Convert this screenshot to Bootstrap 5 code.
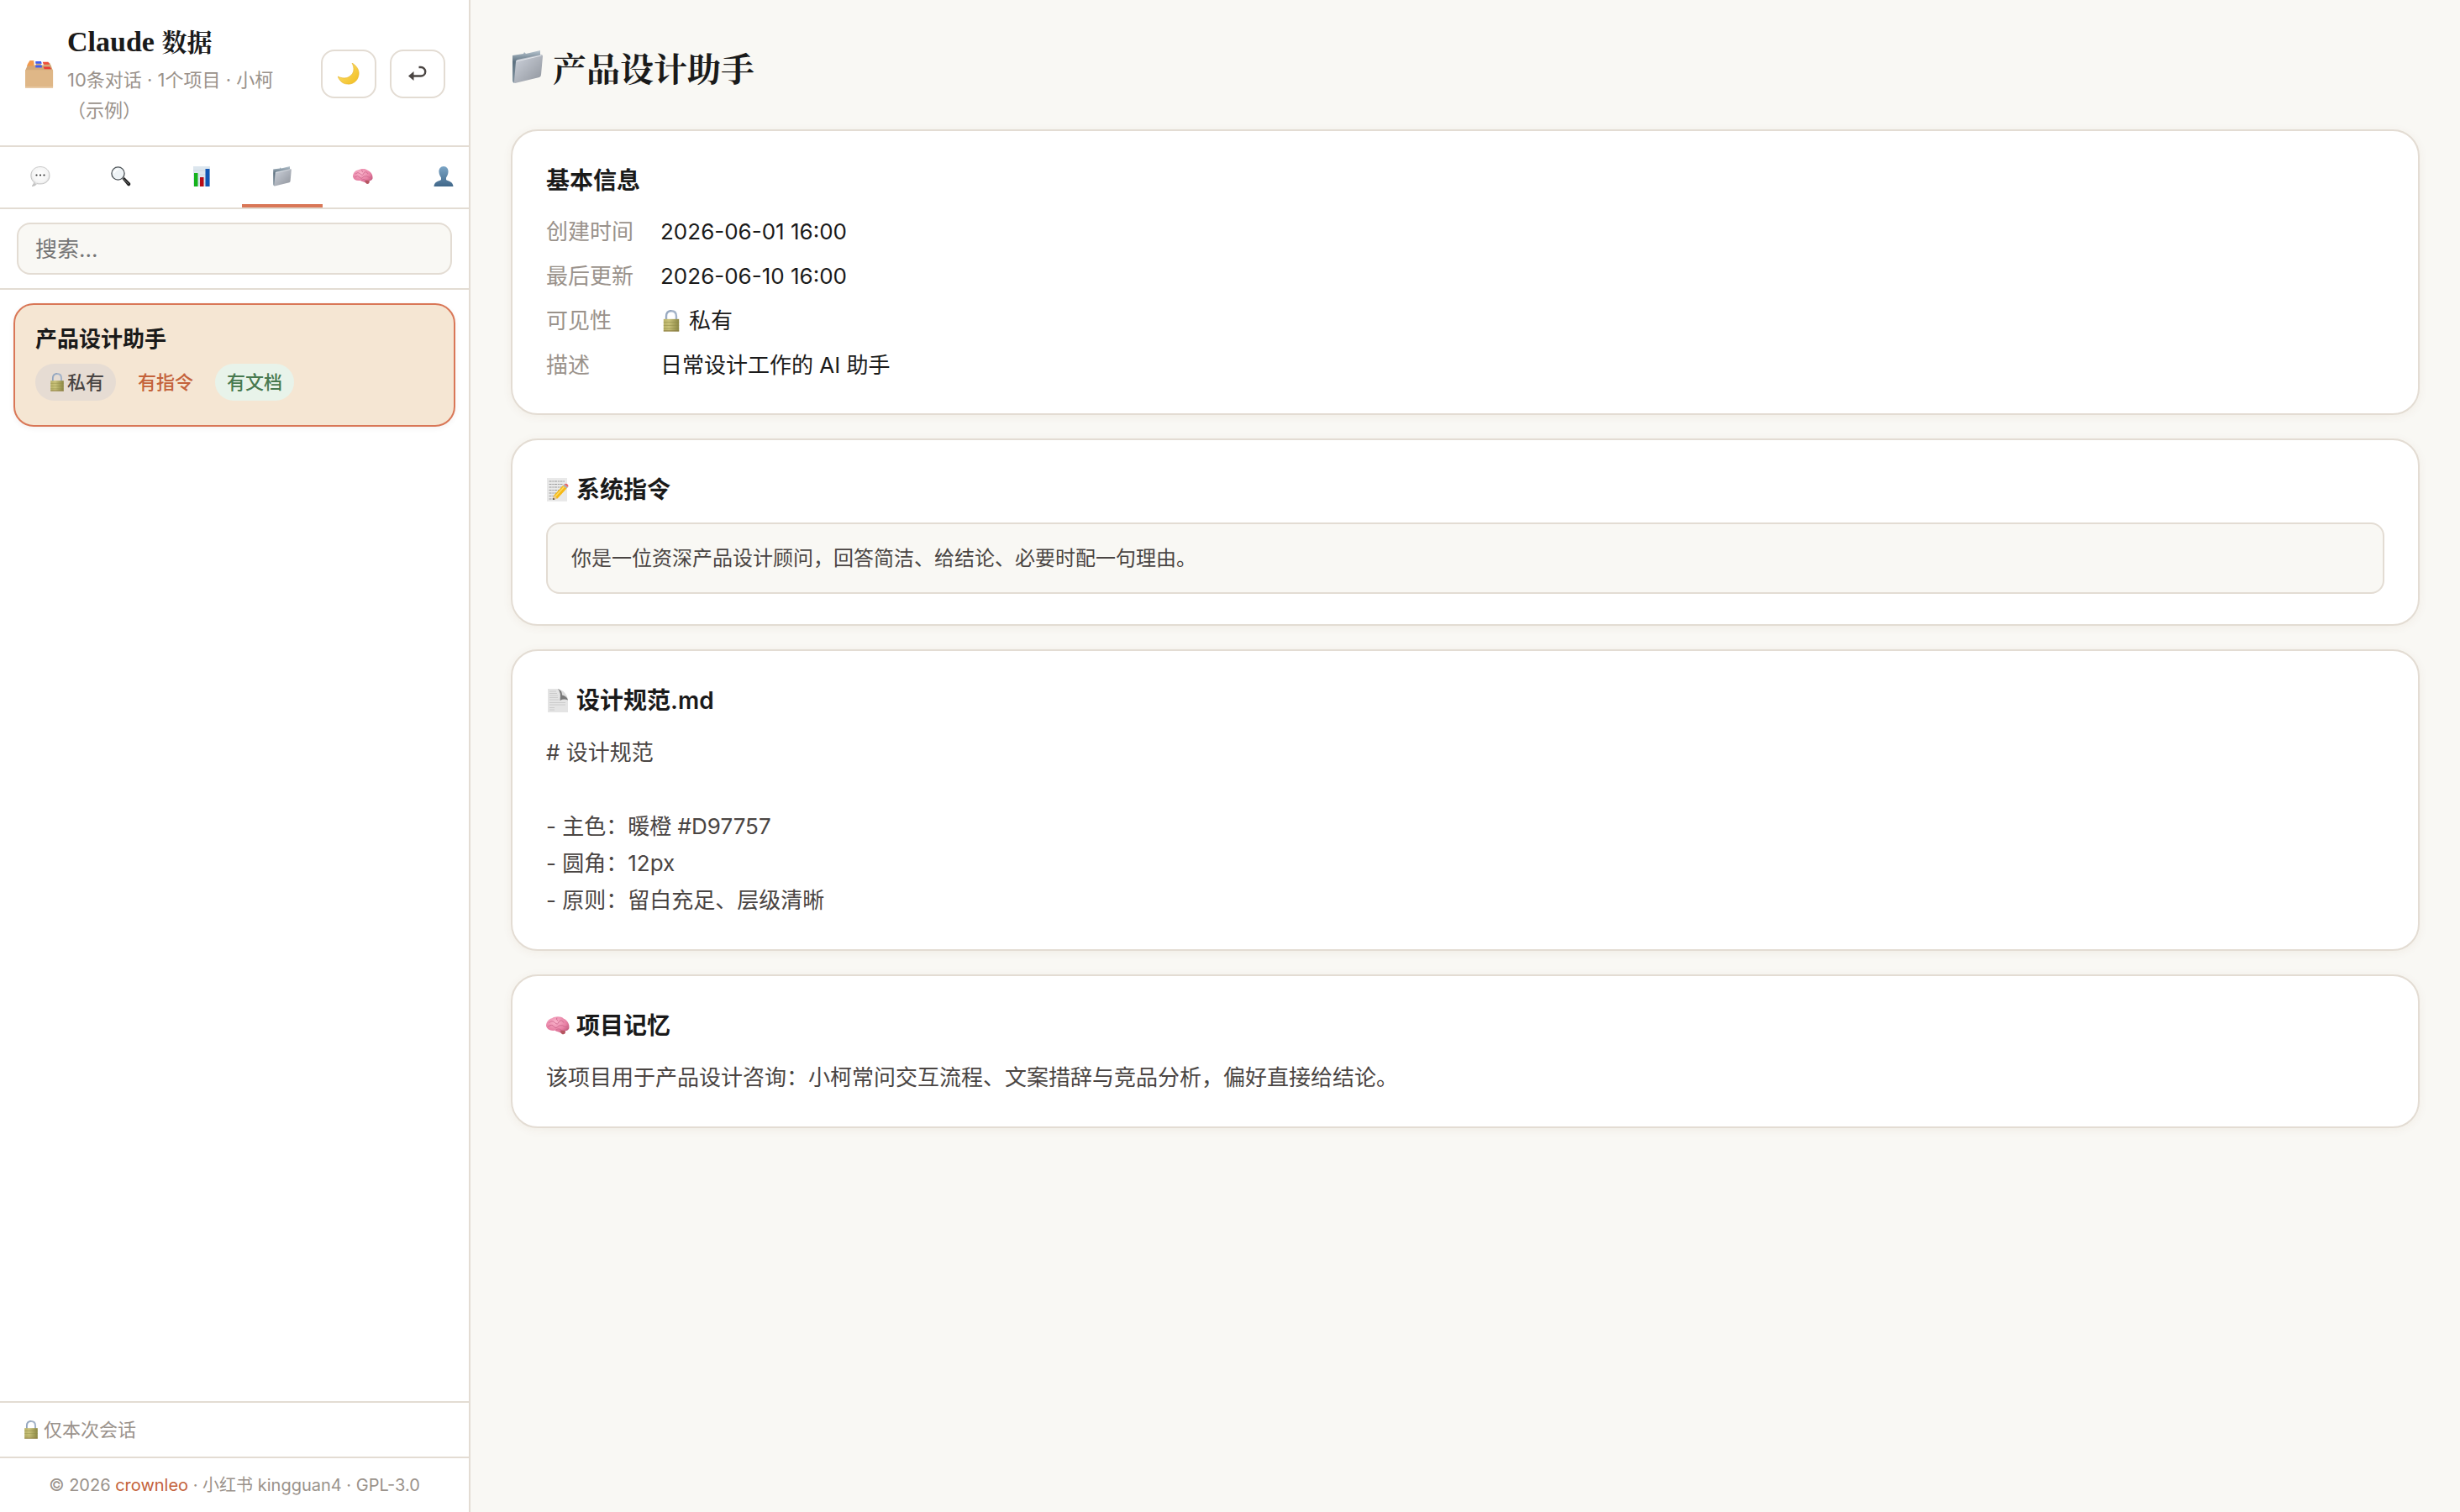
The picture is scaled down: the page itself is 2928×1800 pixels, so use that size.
<!DOCTYPE html>
<html lang="zh-CN">
<head>
<meta charset="utf-8">
<meta name="viewport" content="width=device-width, initial-scale=1">
<title>Claude 数据</title>
<link href="https://cdn.jsdelivr.net/npm/bootstrap@5.3.0/dist/css/bootstrap.min.css" rel="stylesheet">
<style>
:root {
  --line: #e3dcd3;
  --paper: #f9f8f4;
  --ink: #1a1a1a;
  --ink-soft: #4a4543;
  --ink-mute: #9a928b;
  --accent: #d97757;
  --accent-deep: #c4623a;
}
body {
  font-family: Inter, "Noto Sans CJK SC", sans-serif;
  font-size: 26px;
  line-height: 41px;
  color: var(--ink);
  background: var(--paper);
}
.serif { font-family: "Liberation Serif", "Noto Serif CJK SC", "Noto Sans CJK SC", serif; }
.emo { width: 1em; height: 1em; flex: none; overflow: visible; }
.side { width: 560px; border-right: 2px solid var(--line); background: #fff; }
.rule-b { border-bottom: 2px solid var(--line); }
.rule-t { border-top: 2px solid var(--line); }

.side-head { padding: 26px 28px 24px 30px; }
.side-logo { font-size: 34px; margin-right: 16px; }
.brand { font-size: 34px; line-height: 48px; font-weight: 700; margin: 0 0 2px; }
.brand-cjk { font-size: 30px; }
.stats { font-size: 22px; line-height: 36px; color: var(--ink-mute); }
.side-text { flex: 1 1 0; min-width: 0; margin-right: 16px; }
.tool-btn {
  width: 66px; height: 58px; padding: 0; border: 2px solid var(--line); border-radius: 16px;
  background: #fff; font-size: 26px;
}
.tabs-strip { overflow: hidden; height: 74px; }
.tab-btn {
  flex: 0 0 96px; height: 72px; border: 0; border-bottom: 4px solid transparent;
  background: none; padding: 0; font-size: 24px; line-height: 40px;
}
.tab-btn.active { border-bottom-color: var(--accent); }
.search-row { padding: 16px 20px; }
.search-box {
  height: 62px; padding: 0 20px; font-size: 26px; border: 2px solid var(--line);
  border-radius: 16px; background: var(--paper);
}
.search-box::placeholder { color: #757575; opacity: 1; }
.list-area { padding: 16px; }
.project {
  padding: 20px 24px 29px; border: 2px solid var(--accent); border-radius: 24px; background: #f5e6d3;
  color: var(--ink); text-align: left; box-shadow: 0 2px 6px rgba(60, 30, 10, .06);
}
.project-name { font-size: 26px; line-height: 42px; font-weight: 600; margin-bottom: 8px; }
.pills { gap: 12px; }
.pill {
  padding: 0 14px; border-radius: 22px; font-size: 22px; line-height: 44px; font-weight: 500;
}
.pill .emo { width: 24px; }
.pill-private { background: #e6dcd3; color: var(--ink-soft); }
.pill-order { color: var(--accent-deep); }
.pill-doc { background: #e8f3ea; color: #47794f; }
.foot-a { padding: 14px 26px; font-size: 22px; line-height: 36px; color: var(--ink-mute); }
.foot-b { padding: 16px 26px; font-size: 20px; line-height: 32px; color: var(--ink-mute); }
.foot-b a { color: var(--accent-deep); }

.main-pane { padding: 48px; min-width: 0; }
.page-title { font-size: 40px; line-height: 72px; font-weight: 700; margin: 0 0 34px; gap: 10px; }
.page-title .emo { margin-bottom: 8px; }
.panel {
  padding: 36px 40px; margin-bottom: 28px; border: 2px solid var(--line); border-radius: 32px;
  background: #fff; box-shadow: 0 2px 12px rgba(120, 60, 20, .06);
}
.panel h2 { font-size: 28px; line-height: 46px; font-weight: 600; margin: 0 0 16px; gap: 8px; }
.facts { display: grid; grid-template-columns: auto 1fr; gap: 12px 32px; padding: 1px 0; }
.facts dt { font-weight: 400; color: var(--ink-mute); }
.facts dd { margin: 0; }
.body-text { padding-top: 1px; line-height: 44px; color: var(--ink-soft); white-space: pre-line; }
.prompt-box {
  padding: 20px 28px; border: 2px solid var(--line); border-radius: 16px; background: var(--paper);
  font-size: 24px; line-height: 41px; color: var(--ink-soft);
}
</style>
<script src="https://cdn.jsdelivr.net/npm/bootstrap@5.3.0/dist/js/bootstrap.bundle.min.js"></script>
</head>
<body>
<svg width="0" height="0" class="position-absolute" aria-hidden="true">
  <defs>
    <linearGradient id="gFolder" x1="0" y1="0" x2="1" y2="1"><stop offset="0" stop-color="#ced3dc"/><stop offset="1" stop-color="#8f949c"/></linearGradient>
    <linearGradient id="gBack" x1="0" y1="0" x2="0" y2="1"><stop offset="0" stop-color="#b9c6d0"/><stop offset=".35" stop-color="#5d7180"/><stop offset="1" stop-color="#8797a3"/></linearGradient>
    <linearGradient id="gLock" x1="0" y1="0" x2="1" y2="0"><stop offset="0" stop-color="#b9b267"/><stop offset=".35" stop-color="#c9c27a"/><stop offset="1" stop-color="#8b8744"/></linearGradient>
    <linearGradient id="gPerson" x1="0" y1="0" x2="0" y2="1"><stop offset="0" stop-color="#7ba5c6"/><stop offset="1" stop-color="#41688a"/></linearGradient>
    <linearGradient id="gMoon" x1="0" y1="0" x2="1" y2="1"><stop offset="0" stop-color="#fbe27a"/><stop offset="1" stop-color="#f2bd1d"/></linearGradient>
    <radialGradient id="gBrain" cx=".4" cy=".3" r=".8"><stop offset="0" stop-color="#fab4cb"/><stop offset=".6" stop-color="#e77fa3"/><stop offset="1" stop-color="#b64d70"/></radialGradient>
    <radialGradient id="gBubble" cx=".5" cy=".4" r=".6"><stop offset="0" stop-color="#fff"/><stop offset=".7" stop-color="#f4f4f4"/><stop offset="1" stop-color="#c4c4c4"/></radialGradient>
    <symbol id="folder" viewBox="0 0 36 40">
      <path d="M0 6 13 4 14 2 16 4 33 0 33 8 4 36 2 39Q0 38 0 36Z" fill="url(#gBack)"/>
      <path d="M6 11 34 5Q36 5 36 7L34 29Q34 31 32 32L3 39Q2 39 2 37L4 13Q4 12 6 11Z" fill="url(#gFolder)"/>
      <path d="M4.500 13 34.500 6" stroke="#e3e7ec" fill="none"/>
    </symbol>
    <symbol id="box" viewBox="0 0 36 36">
      <path d="M5 4Q5 1 7 1H11V7H3ZM14 4H20V8H13ZM24 4H31L32 9H23Z" fill="#cfa97a"/>
      <path d="M4 4 6 1H10L11 4V8H2Z" fill="#f3994c"/>
      <path d="M3 7 0 14V35Q0 36 1 36H34Q35 36 35 35V14L32 6 22 7Z" fill="#d3a878"/>
      <path d="M13 2H20L21 5H13Z" fill="#3f5cf0"/><path d="M22 3H29L31 6H23Z" fill="#ee4e3a"/>
      <path d="M13 7H21L21 10H13Z" fill="#3f5cf0"/><path d="M23 9H31L33 12H24Z" fill="#ea3a34"/>
      <path d="M4 5H10L10 8H3Z" fill="#f3994c"/>
      <path d="M0 13H35V35Q35 36 34 36H1Q0 36 0 35Z" fill="#dfb787"/>
      <path d="M0 35H35" stroke="#f1dcc0"/>
    </symbol>
    <symbol id="moon" viewBox="0 0 26 26">
      <path d="M17 0C22 3 26 8 25 14 24 22 17 26 11 25 6 25 2 21 0 16 4 18 10 19 14 16 20 12 20 6 17 0Z" fill="url(#gMoon)" stroke="#e5b32a" stroke-width=".6"/>
    </symbol>
    <symbol id="bubble" viewBox="0 0 24 24">
      <path d="M12 .5C18.500 .5 23 5 23 11S18.500 21 12 21C10 21 9 21 8 20.500 7 22 5 23.500 2 23.500 4 22 4.500 20 4.500 19 2 17 .8 14 .8 11 .8 5 5.500 .5 12 .5Z" fill="url(#gBubble)" stroke="#b3b3b3" stroke-width=".7"/>
      <g fill="#333"><circle cx="7.500" cy="10.500" r="1.100"/><circle cx="12" cy="10.500" r="1.100"/><circle cx="16.500" cy="10.500" r="1.100"/></g>
    </symbol>
    <symbol id="lens" viewBox="0 0 24 24">
      <path d="M13.500 15 16 13 23 20Q24 22 21.500 23.500L20 23Z" fill="#222"/>
      <path d="M14 14 21 21" stroke="#777" stroke-width="1"/>
      <circle cx="8.500" cy="8.500" r="7.600" fill="#eef3f6" stroke="#4c5256" stroke-width="1.300"/>
      <path d="M4 8Q5 4 9 3.500" stroke="#fff" stroke-width="1.500" fill="none"/>
    </symbol>
    <symbol id="bars" viewBox="0 0 24 24">
      <path d="M2 0H22V24H2Z" fill="#dce6ee"/><path d="M2 5H22M2 10H22M2 15H22M2 20H22" stroke="#c6d2dc" stroke-width=".6"/>
      <path d="M3 8H7.500V24H3Z" fill="#15b21c"/><path d="M10 13H14.500V24H10Z" fill="#b80d17"/><path d="M16.500 3H21.500V24H16.500Z" fill="#1057b5"/>
    </symbol>
    <symbol id="brain" viewBox="0 0 24 24">
      <path d="M0 12.500C0 8 3 5 6 4.500 9 2.500 15 2 18 5 22 6.500 24 11 23.500 14.500 22.500 17 20.500 17 19.500 17.500 20 21 17 21.500 15 19.500 13 18 11 18.500 9 17 4 17.500 1 16 0 12.500Z" fill="url(#gBrain)"/>
      <path d="M3 9Q6 6 9 9T13 8Q16 5 18 9M2 13Q6 10 8 13T13 12Q17 11 19 13 21 14 22 12M10 16.500Q13 14 16 17M11 4Q10 6 12 7" fill="none" stroke="#c9638a" stroke-width=".7"/>
      <path d="M14.500 17Q18 16.500 19.500 17.500 20 20.500 17 21 15 20 14.500 17Z" fill="#b55660"/>
    </symbol>
    <symbol id="person" viewBox="0 0 24 24">
      <path d="M12 0C15.500 0 18 3 17.500 7 17.300 10 16 12 15 13.500V16C18 18 23 18 23.500 24H.5C1 18 6 18 9 16V13.500C8 12 6.700 10 6.500 7 6 3 8.500 0 12 0Z" fill="url(#gPerson)"/>
    </symbol>
    <symbol id="lock" viewBox="0 0 18 24">
      <path d="M3.500 12V7C3.500 3 6 1.200 9 1.200S14.500 3 14.500 7V12" fill="none" stroke="#a3b3c8" stroke-width="2.200"/>
      <path d="M3 12V7C3 3 6 .5 9 .5" fill="none" stroke="#7f93b0" stroke-width=".6"/>
      <path d="M.5 10H17.500V23.500H.5Z" fill="url(#gLock)"/><path d="M.5 13.500H17.500M.5 17H17.500M.5 20.500H17.500" stroke="#8e8a47" stroke-width=".5"/><path d="M.5 23H17.500" stroke="#8a7a40"/>
    </symbol>
    <symbol id="memo" viewBox="0 0 26 28">
      <path d="M0 0H24V28H0Z" fill="#e9e9e9"/><path d="M2.500 4H21M2.500 7.500H19M2.500 11H20M2.500 14.500H14M2.500 18H11M2.500 21.500H9M2.500 25H8" stroke="#9c9c9c" stroke-width="1.100" stroke-dasharray="3 .8 2 .7"/>
      <path d="M7 26 8 21 19 9 23.500 12.500 12.500 24.500Z" fill="#f6b916"/><path d="M9.500 22.500 20.500 10.500" stroke="#fbdb67" stroke-width="1.500"/>
      <path d="M7 26 8 21 12.500 24.500Z" fill="#e6c9a0"/><path d="M7 26 7.500 23.800 9.500 25.200Z" fill="#333"/>
      <path d="M19 9 20.500 7.500 25 11 23.500 12.500Z" fill="#a9adb3"/><path d="M20.500 7.500Q23 6 25 8 26 10 25 11Z" fill="#e66a6a"/>
    </symbol>
    <symbol id="page" viewBox="0 0 26 28">
      <path d="M1 0H14L25 12V28H1Z" fill="#e4e4e4"/><path d="M3 3H11M3 5.500H12M3 8H13M3 10.500H13M3 13H14M3 16.500H22M3 19H22M3 22.500H9M3 25H9" stroke="#c4c4c4" stroke-width=".8"/>
      <path d="M13 0Q17 4 15.500 14 20 11.500 25 13.500 24 9 20 7 18 2 13 0Z" fill="#7a7a7a"/><path d="M15 .5Q23 4 25 12 22 8 18 7.500 18 3 15 .5Z" fill="#dcdcdc"/>
    </symbol>
    <symbol id="back" viewBox="0 0 22 20">
      <path d="M6 12.500H15A5.200 5.200 0 0 0 15 2H12.500" fill="none" stroke="#4a4543" stroke-width="2.400"/><path d="M0 12.500 6.500 7V18Z" fill="#4a4543"/>
    </symbol>
  </defs>
</svg>

<div class="d-flex min-vh-100">
  <aside class="side d-flex flex-column flex-shrink-0">
    <header class="side-head rule-b d-flex align-items-center">
      <svg class="emo side-logo" aria-hidden="true"><use href="#box"/></svg>
      <div class="side-text">
        <h1 class="brand serif">Claude <span class="brand-cjk">数据</span></h1>
        <div class="stats">10条对话 · 1个项目 · 小柯（示例）</div>
      </div>
      <div class="d-flex gap-3">
        <button type="button" class="tool-btn d-flex align-items-center justify-content-center" aria-label="深色模式"><svg class="emo"><use href="#moon"/></svg></button>
        <button type="button" class="tool-btn d-flex align-items-center justify-content-center" aria-label="返回"><svg width="22" height="20"><use href="#back"/></svg></button>
      </div>
    </header>
    <nav class="tabs-strip rule-b d-flex" aria-label="视图">
      <button type="button" class="tab-btn" aria-label="对话"><svg class="emo"><use href="#bubble"/></svg></button>
      <button type="button" class="tab-btn" aria-label="搜索"><svg class="emo"><use href="#lens"/></svg></button>
      <button type="button" class="tab-btn" aria-label="统计"><svg class="emo"><use href="#bars"/></svg></button>
      <button type="button" class="tab-btn active" aria-label="项目"><svg class="emo"><use href="#folder"/></svg></button>
      <button type="button" class="tab-btn" aria-label="记忆"><svg class="emo"><use href="#brain"/></svg></button>
      <button type="button" class="tab-btn" aria-label="账户"><svg class="emo"><use href="#person"/></svg></button>
    </nav>
    <div class="search-row rule-b">
      <input type="search" class="form-control search-box" placeholder="搜索..." aria-label="搜索">
    </div>
    <div class="list-area flex-grow-1">
      <button type="button" class="project d-block w-100">
        <span class="project-name d-block">产品设计助手</span>
        <span class="pills d-flex">
          <span class="pill pill-private d-flex align-items-center"><svg class="emo"><use href="#lock"/></svg>私有</span>
          <span class="pill pill-order">有指令</span>
          <span class="pill pill-doc">有文档</span>
        </span>
      </button>
    </div>
    <div class="foot-a rule-t d-flex align-items-center gap-1"><svg class="emo"><use href="#lock"/></svg>仅本次会话</div>
    <footer class="foot-b rule-t text-center">© 2026 <a href="#" class="text-decoration-none">crownleo</a> · 小红书 kingguan4 · GPL-3.0</footer>
  </aside>

  <main class="main-pane flex-grow-1">
    <h1 class="page-title serif d-flex align-items-center"><svg class="emo"><use href="#folder"/></svg>产品设计助手</h1>

    <section class="panel">
      <h2>基本信息</h2>
      <dl class="facts m-0">
        <dt>创建时间</dt><dd>2026-06-01 16:00</dd>
        <dt>最后更新</dt><dd>2026-06-10 16:00</dd>
        <dt>可见性</dt><dd class="d-flex align-items-center gap-2"><svg class="emo"><use href="#lock"/></svg>私有</dd>
        <dt>描述</dt><dd>日常设计工作的 AI 助手</dd>
      </dl>
    </section>

    <section class="panel">
      <h2 class="d-flex align-items-center"><svg class="emo"><use href="#memo"/></svg>系统指令</h2>
      <div class="prompt-box">你是一位资深产品设计顾问，回答简洁、给结论、必要时配一句理由。</div>
    </section>

    <section class="panel">
      <h2 class="d-flex align-items-center"><svg class="emo"><use href="#page"/></svg>设计规范.md</h2>
      <div class="body-text"># 设计规范

- 主色：暖橙 #D97757
- 圆角：12px
- 原则：留白充足、层级清晰</div>
    </section>

    <section class="panel">
      <h2 class="d-flex align-items-center"><svg class="emo"><use href="#brain"/></svg>项目记忆</h2>
      <div class="body-text">该项目用于产品设计咨询：小柯常问交互流程、文案措辞与竞品分析，偏好直接给结论。</div>
    </section>
  </main>
</div>
</body>
</html>
